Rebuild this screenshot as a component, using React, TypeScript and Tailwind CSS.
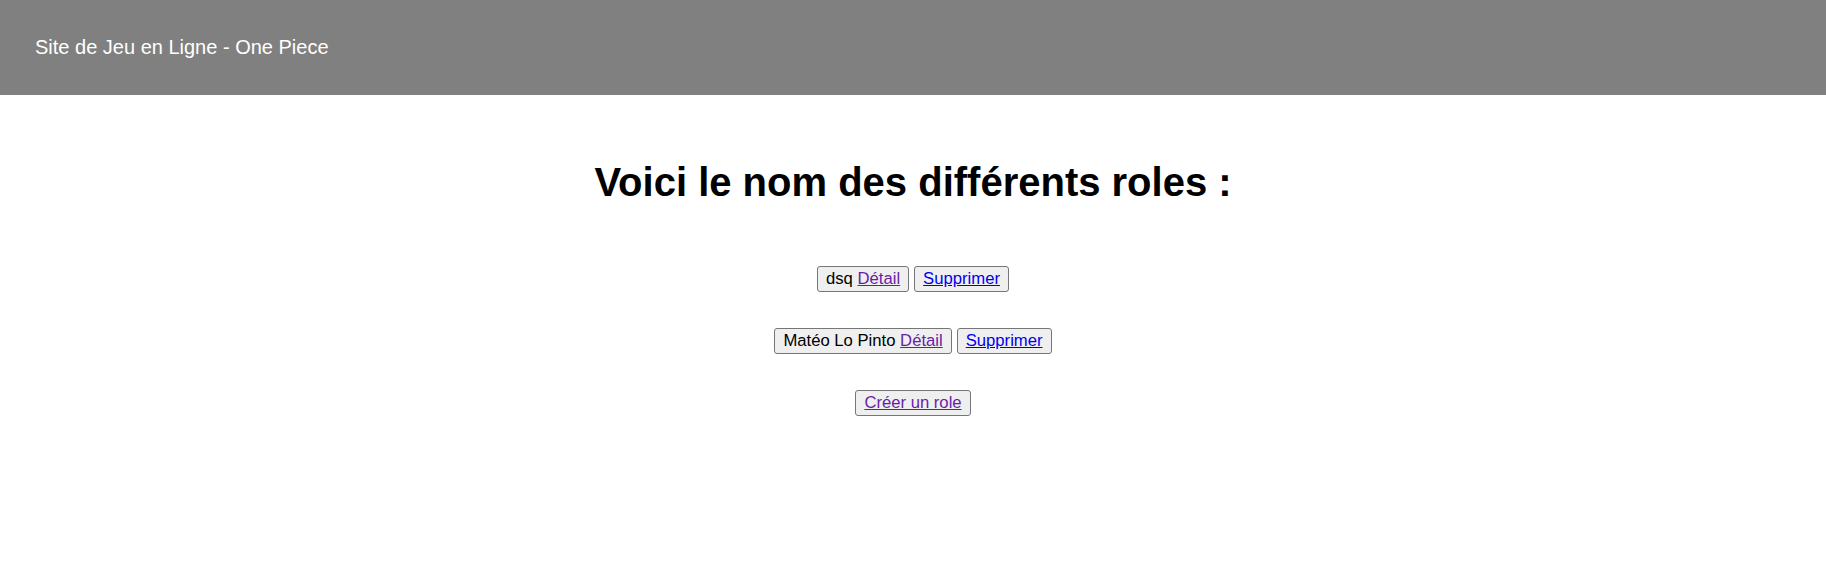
import React from "react";

const btn =
  "inline-flex items-center h-[26px] px-[8px] border border-[#767676] rounded-[3px] bg-[#efefef] text-[16.67px] leading-none text-black";

export default function App() {
  return (
    <div className="w-[1826px] h-[585px] bg-white" style={{ fontFamily: '"Liberation Sans", Arial, sans-serif' }}>
      <header className="h-[95px] bg-[#808080] pl-[35px] pt-[36px]">
        <div className="text-white text-[20px] leading-[23px]">Site de Jeu en Ligne - One Piece</div>
      </header>
      <h1 className="mt-[64px] text-center text-[40px] font-bold leading-[46px] text-black">
        Voici le nom des différents roles :
      </h1>
      <div className="mt-[61px] flex flex-col items-center gap-[36px]">
        <div className="flex gap-[5px]">
          <span className={btn}>
            dsq&nbsp;<a className="underline text-[#681da8]">Détail</a>
          </span>
          <span className={btn}>
            <a className="underline text-[#0000ee]">Supprimer</a>
          </span>
        </div>
        <div className="flex gap-[5px]">
          <span className={btn}>
            Matéo Lo Pinto&nbsp;<a className="underline text-[#681da8]">Détail</a>
          </span>
          <span className={btn}>
            <a className="underline text-[#0000ee]">Supprimer</a>
          </span>
        </div>
        <div className="flex">
          <span className={btn}>
            <a className="underline text-[#681da8]">Créer un role</a>
          </span>
        </div>
      </div>
    </div>
  );
}
